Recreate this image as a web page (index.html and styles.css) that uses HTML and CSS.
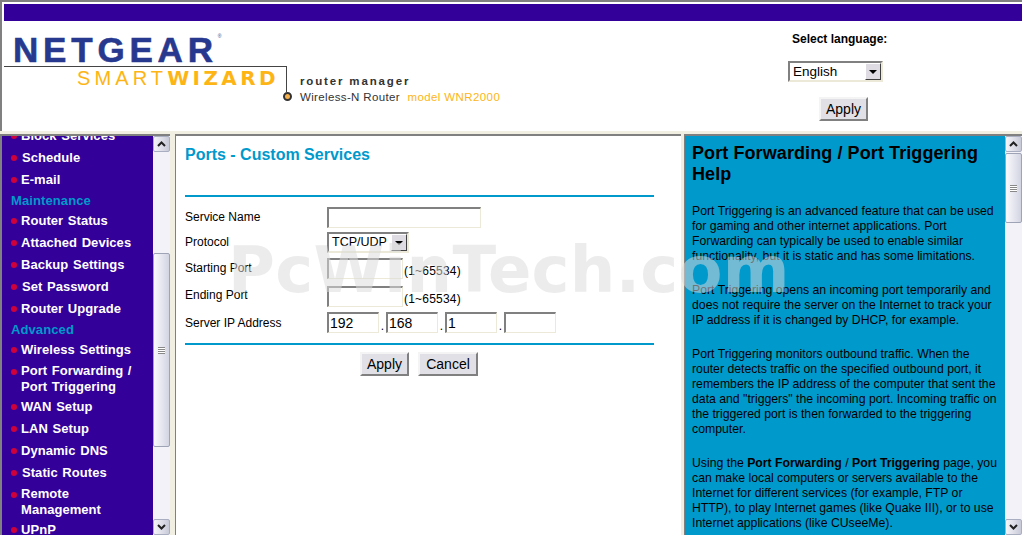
FILE: index.html
```html
<!DOCTYPE html>
<html lang="en">
<head>
<meta charset="utf-8">
<title>NETGEAR Router Manager</title>
<link rel="stylesheet" href="styles.css">
</head>
<body>
<div class="page">
  <header class="top">
    <div class="band"></div>
    <div class="top-main">
      <div class="logo">
        <div class="netgear">NETGEAR<sup class="reg">®</sup></div>
        <div class="rule">
          <div class="smart">SMART<b>WIZARD</b></div>
          <span class="dot"></span>
        </div>
      </div>
      <div class="tag">
        <div class="tag-a">router manager</div>
        <div class="tag-b">Wireless-N Router <span class="model">model WNR2000</span></div>
      </div>
      <form class="lang">
        <div class="lang-label">Select language:</div>
        <div class="sel sel-lang"><span class="sel-text">English</span><span class="sel-btn"><i class="tri"></i></span></div>
        <button type="button" class="btn btn-lang">Apply</button>
      </form>
    </div>
  </header>
  <div class="frames">
    <nav class="frame menu-frame">
      <div class="menu-clip">
        <ul class="menu">
          <li class="item"><span class="label">Block Services</span></li>
          <li class="item"><span class="label nudge">Schedule</span></li>
          <li class="item"><span class="label">E-mail</span></li>
          <li class="head">Maintenance</li>
          <li class="item"><span class="label">Router Status</span></li>
          <li class="item"><span class="label">Attached Devices</span></li>
          <li class="item"><span class="label">Backup Settings</span></li>
          <li class="item"><span class="label nudge">Set Password</span></li>
          <li class="item"><span class="label">Router Upgrade</span></li>
          <li class="head">Advanced</li>
          <li class="item"><span class="label">Wireless Settings</span></li>
          <li class="item two"><span class="label">Port Forwarding /<br>Port Triggering</span></li>
          <li class="item"><span class="label">WAN Setup</span></li>
          <li class="item"><span class="label">LAN Setup</span></li>
          <li class="item"><span class="label">Dynamic DNS</span></li>
          <li class="item"><span class="label nudge">Static Routes</span></li>
          <li class="item two"><span class="label">Remote<br>Management</span></li>
          <li class="item"><span class="label">UPnP</span></li>
        </ul>
      </div>
      <div class="sb">
        <div class="sb-btn"><svg viewBox="0 0 9 6" width="9" height="6"><path d="M1 5 4.500 1.500 8 5" fill="none" stroke="#222" stroke-width="2"/></svg></div>
        <div class="sb-thumb thumb-left"><span class="grip"></span></div>
        <div class="sb-btn sb-end"><svg viewBox="0 0 9 6" width="9" height="6"><path d="M1 1 4.500 4.500 8 1" fill="none" stroke="#222" stroke-width="2"/></svg></div>
      </div>
    </nav>
    <main class="frame content">
      <h1 class="title">Ports - Custom Services</h1>
      <div class="line line-top"></div>
      <div class="fields">
        <label class="f-label l1">Service Name</label>
        <input class="inp inp-name" type="text">
        <label class="f-label l2">Protocol</label>
        <div class="sel sel-proto"><span class="sel-text">TCP/UDP</span><span class="sel-btn"><i class="tri"></i></span></div>
        <label class="f-label l3">Starting Port</label>
        <div class="port-row"><input class="inp inp-port" type="text"><span class="range">(1~65534)</span></div>
        <label class="f-label l4">Ending Port</label>
        <div class="port-row"><input class="inp inp-port" type="text"><span class="range">(1~65534)</span></div>
        <label class="f-label l5">Server IP Address</label>
        <div class="ip-row">
          <input class="inp inp-ip" type="text" value="192"><span class="ip-dot">.</span>
          <input class="inp inp-ip" type="text" value="168"><span class="ip-dot">.</span>
          <input class="inp inp-ip" type="text" value="1"><span class="ip-dot">.</span>
          <input class="inp inp-ip" type="text">
        </div>
      </div>
      <div class="line line-bottom"></div>
      <div class="actions">
        <button type="button" class="btn btn-apply">Apply</button>
        <button type="button" class="btn btn-cancel">Cancel</button>
      </div>
    </main>
    <aside class="frame help-frame">
      <div class="help">
        <h2 class="help-title">Port Forwarding / Port Triggering Help</h2>
        <p>Port Triggering is an advanced feature that can be used for gaming and other internet applications. Port Forwarding can typically be used to enable similar functionality, but it is static and has some limitations.</p>
        <p>Port Triggering opens an incoming port temporarily and does not require the server on the Internet to track your IP address if it is changed by DHCP, for example.</p>
        <p>Port Triggering monitors outbound traffic. When the router detects traffic on the specified outbound port, it remembers the IP address of the computer that sent the data and "triggers" the incoming port. Incoming traffic on the triggered port is then forwarded to the triggering computer.</p>
        <p>Using the <b>Port Forwarding</b> / <b>Port Triggering</b> page, you can make local computers or servers available to the Internet for different services (for example, FTP or HTTP), to play Internet games (like Quake III), or to use Internet applications (like CUseeMe).</p>
      </div>
      <div class="sb">
        <div class="sb-btn"><svg viewBox="0 0 9 6" width="9" height="6"><path d="M1 5 4.500 1.500 8 5" fill="none" stroke="#222" stroke-width="2"/></svg></div>
        <div class="sb-thumb thumb-right"><span class="grip"></span></div>
        <div class="sb-btn sb-end"><svg viewBox="0 0 9 6" width="9" height="6"><path d="M1 1 4.500 4.500 8 1" fill="none" stroke="#222" stroke-width="2"/></svg></div>
      </div>
    </aside>
  </div>
  <div class="watermark">PcWinTech.com</div>
</div>
</body>
</html>
```
FILE: styles.css
```css
* { box-sizing: border-box; }
html, body { margin: 0; padding: 0; }
body { font-family: "Liberation Sans", Arial, sans-serif; background: #ece9d8; }
.page { position: relative; width: 1022px; height: 535px; overflow: hidden; display: flex; flex-direction: column; background: #f1efe2; border-top: 2px solid #808080; }
.top { height: 129px; flex: none; background: #fff; border-left: 2px solid #808080; padding: 2px 0 0 2px; display: flex; flex-direction: column; }
.band { height: 17px; background: #330099; flex: none; }
.top-main { flex: 1; display: flex; align-items: flex-start; }
.logo { width: 283px; flex: none; padding-top: 14px; }
.netgear { height: 31px; padding-left: 9px; font-size: 35px; line-height: 30px; font-weight: 700; letter-spacing: 4.800px; -webkit-text-stroke: .6px #27388f; color: #27388f; white-space: nowrap; }
.reg { font-size: 5px; font-weight: 400; letter-spacing: 0; vertical-align: 24px; line-height: 0; -webkit-text-stroke: 0; }
.rule { position: relative; height: 26px; border-top: 1px solid #444; border-right: 1px solid #444; }
.smart { position: absolute; top: 0; left: 73px; font-size: 20px; line-height: 23px; letter-spacing: 4.100px; font-weight: 400; color: #fdb515; white-space: nowrap; }
.smart b { font-weight: 700; font-size: 20px; letter-spacing: 3.400px; font-family: "DejaVu Sans", sans-serif; }
.dot { position: absolute; left: 279px; bottom: -9px; width: 9px; height: 9px; border-radius: 50%; background: #f6b14c; border: 2px solid #333; }
.tag { width: 484px; flex: none; padding: 53px 0 0 13px; }
.tag-a { font-size: 11.500px; line-height: 14px; font-weight: 700; letter-spacing: 1.850px; color: #333; }
.tag-b { font-size: 11.500px; line-height: 16px; letter-spacing: .35px; color: #333; white-space: nowrap; margin-top: 1px; }
.model { color: #fdb515; margin-left: 4px; letter-spacing: .4px; }
.lang { width: 251px; padding-top: 10px; display: flex; flex-direction: column; }
.lang-label { font-size: 12px; line-height: 16px; font-weight: 700; color: #000; padding-left: 21px; }
.sel { display: flex; background: #fff; border: 2px solid #808080; border-right-color: #ece9d8; border-bottom-color: #ece9d8; align-items: stretch; }
.sel-text { flex: 1; font-size: 13.500px; line-height: 17px; color: #000; padding-left: 3px; }
.sel-btn { width: 16px; flex: none; background: #dedce2; border: 1px solid; border-color: #fff #404040 #404040 #fff; display: flex; align-items: center; justify-content: center; }
.tri { width: 0; height: 0; border-style: solid; border-width: 4px 4px 0; border-color: #000 transparent transparent; }
.sel-lang { width: 95px; height: 21px; margin: 14px 0 0 17px; }
.btn { font-family: "Liberation Sans", Arial, sans-serif; font-size: 14px; line-height: 16px; color: #000; background: #e1e0e6; border: 2px solid; border-color: #f4f4f4 #808080 #808080 #f4f4f4; padding: 0; }
.btn-lang { width: 49px; height: 24px; margin: 15px 0 0 48px; }
.frames { flex: 1; display: flex; background: #f1efe2; padding-top: 3px; min-height: 0; }
.frame { display: flex; min-height: 0; border-top: 2px solid #808080; }
.menu-frame { width: 170px; flex: none; border-left: 2px solid #808080; }
.menu-clip { width: 151px; flex: none; background: #330099; overflow: hidden; }
.menu { list-style: none; margin: -11px 0 0; padding: 0; }
.item { min-height: 22px; padding: 3px 0 3px 19px; position: relative; font-size: 13px; line-height: 16px; font-weight: 700; color: #fff; letter-spacing: .05px; word-spacing: 1px; }
.item::before { content: ""; position: absolute; left: 9px; top: 8px; width: 6px; height: 6px; border-radius: 50%; background: #d0003a; }
.item.two { padding: 2px 0 1px 19px; }
.nudge { margin-left: 1px; }
.head { height: 19px; padding: 0 0 0 9px; font-size: 13px; line-height: 19px; font-weight: 700; color: #0099cc; letter-spacing: .1px; }
.sb { width: 17px; flex: none; background: #f2f2f8; display: flex; flex-direction: column; position: relative; }
.sb-btn { height: 16px; flex: none; background: linear-gradient(90deg, #f5f5fa, #c8cad8); border: 1px solid #a9aec0; border-radius: 2px; display: flex; align-items: center; justify-content: center; }
.sb-thumb { flex: none; background: linear-gradient(90deg, #fafafd, #d2d4e2); border: 1px solid #9ea3b6; border-radius: 2px; display: flex; align-items: center; justify-content: center; }
.thumb-left { height: 194px; margin-top: 101px; }
.thumb-right { height: 70px; margin-top: 1px; }
.grip { width: 7px; height: 7px; border-top: 1px solid #888; border-bottom: 1px solid #888; background: linear-gradient(#fff 0 1px, #888 1px 2px, #fff 2px 3px, #888 3px 4px, #fff 4px); }
.sb-end { margin-top: auto; }
.content { width: 506px; flex: none; margin-left: 5px; background: #fff; flex-direction: column; border-left: 1px solid #808080; padding-left: 9px; }
.title { margin: 9px 0 0; font-size: 16px; line-height: 20px; font-weight: 700; color: #0099cc; }
.line { width: 469px; height: 2px; background: #0099cc; flex: none; }
.line-top { margin-top: 30px; }
.line-bottom { margin-top: 10px; }
.fields { display: grid; grid-template-columns: 142px 1fr; grid-template-rows: 25px 26px 28px 26px 21px; margin-top: 10px; align-items: start; }
.f-label { font-size: 12px; line-height: 14px; color: #000; }
.l1 { padding-top: 3px; }
.l2 { padding-top: 3px; }
.l3 { padding-top: 3px; }
.l4 { padding-top: 2px; }
.l5 { padding-top: 4px; }
.inp { font-family: "Liberation Sans", Arial, sans-serif; font-size: 14px; height: 21px; padding: 0 1px; margin: 0; background: #fff; color: #000; border: 2px solid #808080; border-right: 1px solid #ece9d8; border-bottom: 1px solid #ece9d8; border-radius: 0; outline: none; }
.inp-name { width: 154px; }
.sel-proto { width: 82px; height: 21px; }
.sel-proto .sel-text { font-size: 12.500px; }
.port-row { display: flex; align-items: flex-end; gap: 1px; }
.inp-port { width: 76px; }
.range { font-size: 12px; line-height: 14px; letter-spacing: .2px; color: #000; margin-bottom: 1px; }
.ip-row { display: flex; align-items: flex-end; }
.inp-ip { width: 52px; }
.ip-dot { width: 7px; font-size: 12px; line-height: 14px; text-align: center; }
.actions { display: flex; gap: 9px; margin: 7px 0 0 175px; }
.btn-apply { width: 49px; height: 24px; }
.btn-cancel { width: 60px; height: 24px; }
.help-frame { flex: 1; margin-left: 3px; border-left: 1px solid #808080; }
.help { width: 320px; flex: none; background: #0099cc; padding: 7px 6px 0 7px; overflow: hidden; color: #000; }
.help-title { margin: 0; padding-bottom: .5px; font-size: 18px; line-height: 21px; font-weight: 700; letter-spacing: .09px; }
.help p { margin: 18.500px 0; font-size: 12.250px; line-height: 15.100px; }
.watermark { position: absolute; left: 228px; top: 232px; font-family: "DejaVu Sans", sans-serif; font-size: 64px; line-height: 72px; font-weight: 700; letter-spacing: .3px; color: rgba(219,219,219,.525); pointer-events: none; white-space: nowrap; }
```
